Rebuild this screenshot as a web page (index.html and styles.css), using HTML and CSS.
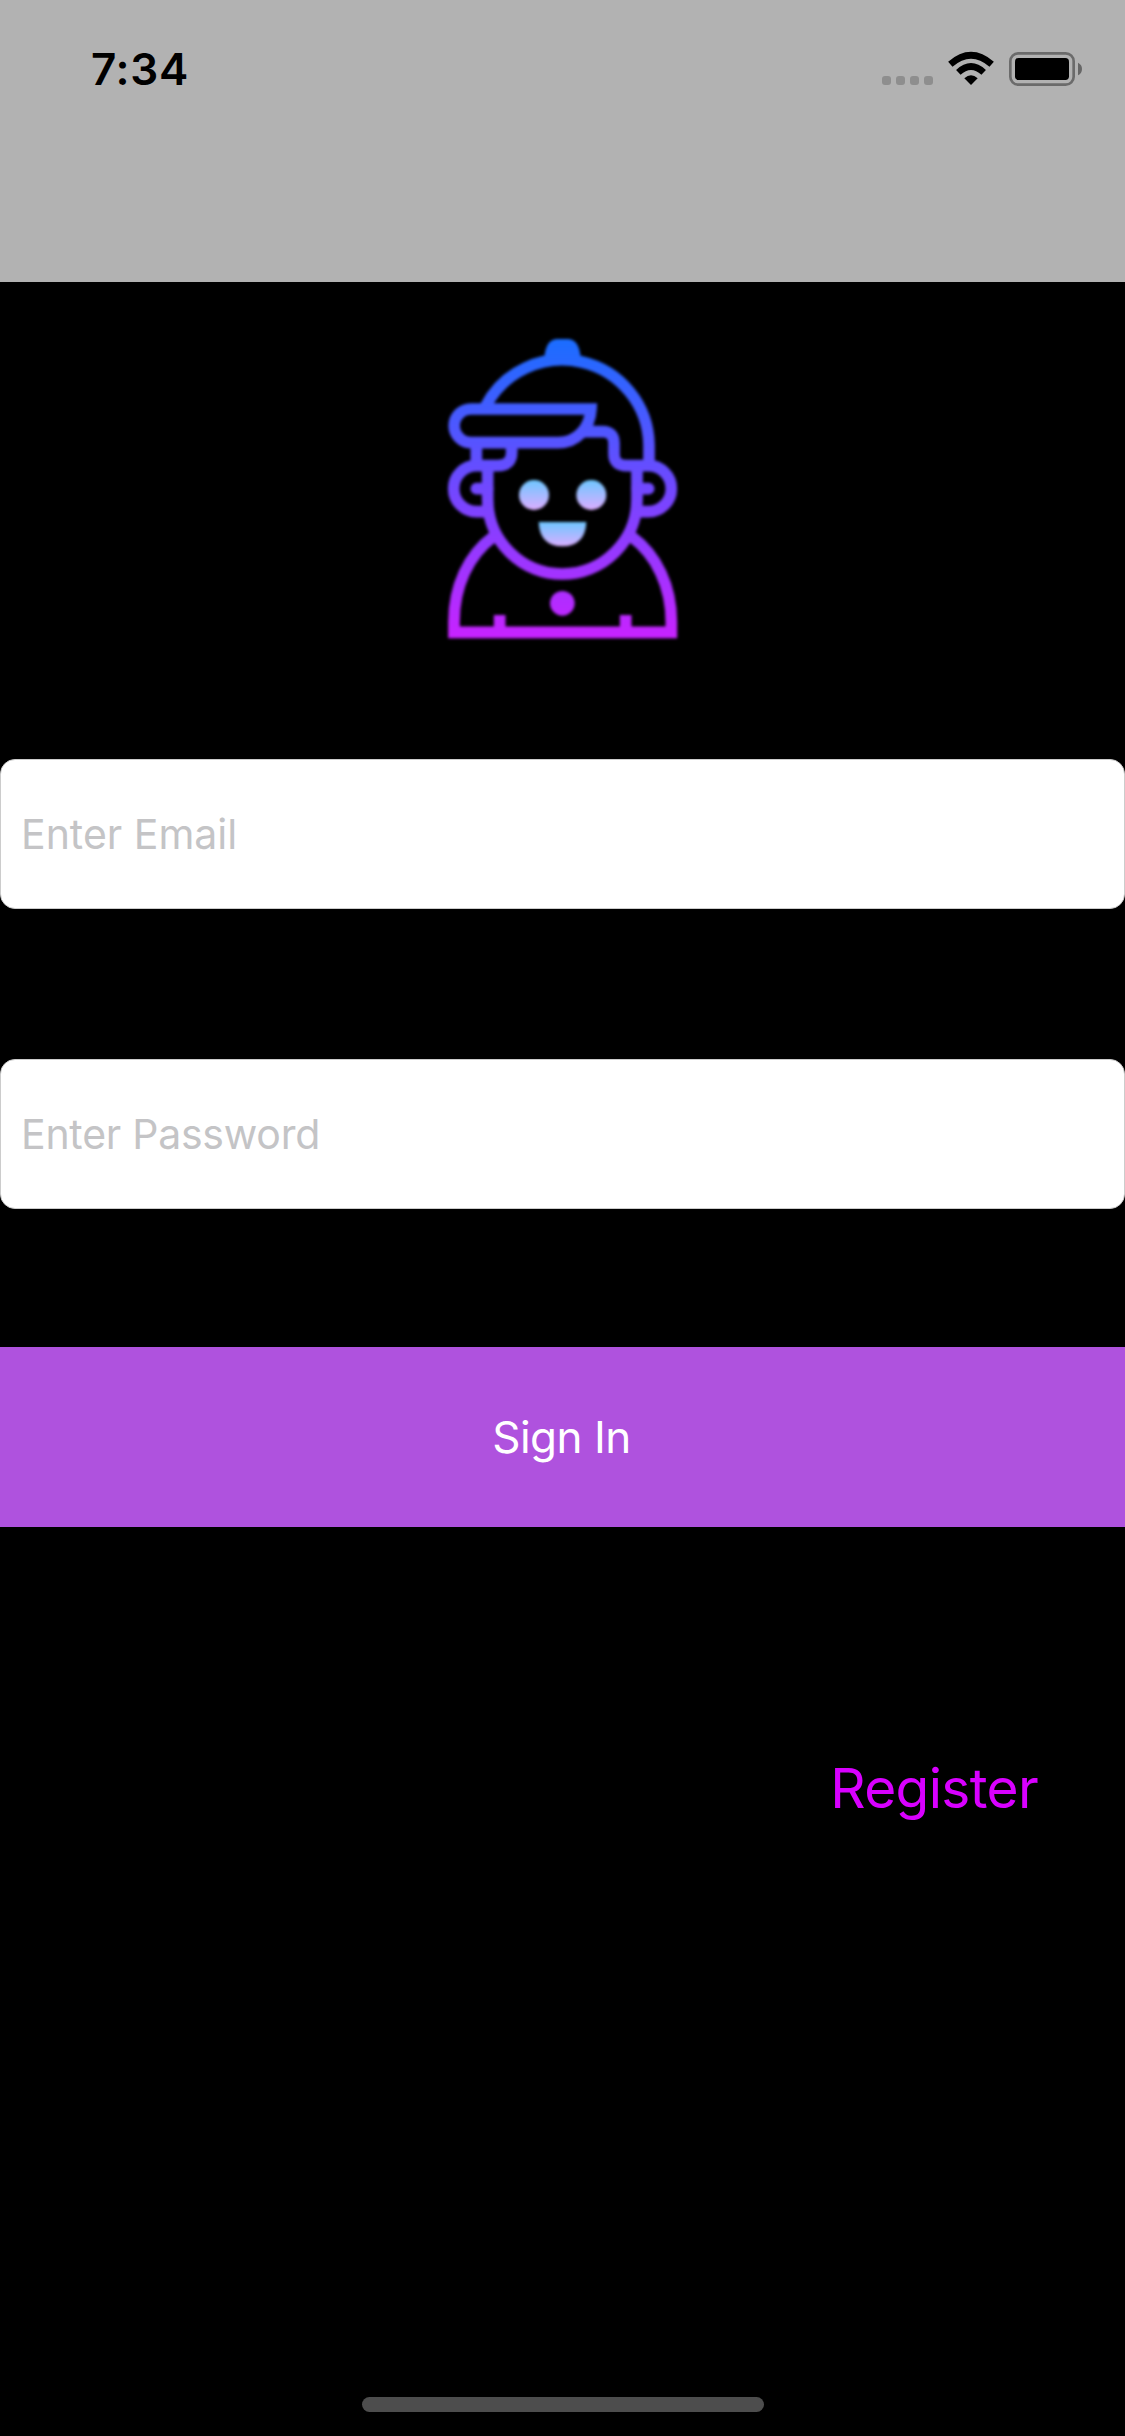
FILE: index.html
```html
<!DOCTYPE html>
<html lang="en">
<head>
<meta charset="utf-8">
<title>Sign In</title>
<link rel="stylesheet" href="styles.css">
</head>
<body>
<div class="screen">
  <header class="status-bar">
    <span class="time">7:34</span>
    <svg class="status-icons" viewBox="0 0 720 240" aria-hidden="true">
      <g fill="#8e8e8e">
        <rect x="66" y="138" width="27" height="27" rx="9"/>
        <rect x="108" y="138" width="27" height="27" rx="9"/>
        <rect x="150" y="138" width="27" height="27" rx="9"/>
        <rect x="192" y="138" width="27" height="27" rx="9"/>
      </g>
      <path d="M333 165 L313 145 Q333 126 353 145 Z"/>
      <g fill="none" stroke="#000" stroke-width="20">
        <path d="M295 127 Q333 92 371 127"/>
        <path d="M271 103 Q333 49 395 103"/>
      </g>
      <rect x="451" y="70" width="190" height="94" rx="24" fill="none" stroke="#6b6b6b" stroke-width="8"/>
      <rect x="465" y="84" width="162" height="66" rx="11"/>
      <path d="M654 98 Q666 104 666 117 Q666 130 654 136 Z" fill="#666"/>
    </svg>
  </header>

  <main class="content">
    <svg class="avatar" viewBox="0 0 810 1020" aria-hidden="true">
      <defs>
        <linearGradient id="line" gradientUnits="userSpaceOnUse" x1="0" y1="57" x2="0" y2="955">
          <stop offset="0" stop-color="#1a6dff"/>
          <stop offset="1" stop-color="#c822ff"/>
        </linearGradient>
        <linearGradient id="eyes" gradientUnits="userSpaceOnUse" x1="0" y1="480" x2="0" y2="578">
          <stop offset="0" stop-color="#6dc7ff"/>
          <stop offset="1" stop-color="#e6abff"/>
        </linearGradient>
        <linearGradient id="mouth" gradientUnits="userSpaceOnUse" x1="0" y1="605" x2="0" y2="688">
          <stop offset="0" stop-color="#6dc7ff"/>
          <stop offset="1" stop-color="#e6abff"/>
        </linearGradient>
        <filter id="soft" filterUnits="userSpaceOnUse" x="0" y="0" width="810" height="1020" color-interpolation-filters="sRGB">
          <feGaussianBlur stdDeviation="4"/>
        </filter>
      </defs>
      <g filter="url(#soft)">
        <g fill="none" stroke="url(#line)" stroke-width="35">
          <path d="M165 262 A260 260 0 0 1 657 375 V430"/>
          <path d="M123 267 H483 C480 325 440 368 385 368 H123 A50.5 50.5 0 0 1 123 267 Z"/>
          <path d="M455 335 H518 Q552 335 552 370 V402 Q552 437 590 437 H655 A69 69 0 0 1 655 575 H618"/>
          <path d="M245 375 V397 Q245 437 203 437 H140 A69 69 0 0 0 140 575 H178"/>
          <path d="M139 375 V437"/>
          <path d="M173 437 V538 A224 224 0 0 0 621 538 V437"/>
          <path d="M173 506 H139 M621 506 H656" stroke-linecap="round"/>
          <path d="M190 650 C115 705 72 800 72 905 V937 H724 V905 C724 800 680 705 605 650"/>
          <path d="M209 885 V937 M587 885 V937"/>
        </g>
        <g fill="url(#line)">
          <path d="M343 112 C346 78 358 58 380 57 H415 C437 58 449 78 452 112 Z"/>
          <circle cx="397" cy="850" r="37"/>
        </g>
        <g fill="url(#eyes)">
          <circle cx="312" cy="525" r="45"/>
          <circle cx="484" cy="525" r="45"/>
        </g>
        <path d="M326 606 H469 Q466 678 397 679 Q329 678 326 606 Z" fill="url(#mouth)"/>
      </g>
    </svg>

    <form class="form">
      <input class="field email" type="email" placeholder="Enter Email">
      <input class="field password" type="password" placeholder="Enter Password">
      <button class="sign-in" type="button">Sign In</button>
    </form>
    <a class="register">Register</a>
  </main>

  <footer class="home"><div class="home-bar"></div></footer>
</div>
</body>
</html>
```
FILE: styles.css
```css
* {
  box-sizing: border-box;
}

body {
  margin: 0;
  background: #000;
  font-family: Inter, "Liberation Sans", sans-serif;
}

.screen {
  display: flex;
  flex-direction: column;
  width: 1125px;
  height: 2436px;
  background: #000;
}

.status-bar {
  display: flex;
  justify-content: space-between;
  align-items: flex-start;
  height: 282px;
  padding: 30px 25px 0 91px;
  background: #b2b2b2;
}

.time {
  padding-top: 12px;
  font-size: 44px;
  font-weight: 600;
  line-height: 54px;
  letter-spacing: 0.7px;
  color: #000;
}

.status-icons {
  width: 240px;
  height: 80px;
}

.content {
  display: flex;
  flex: 1;
  flex-direction: column;
  padding-top: 38px;
}

.avatar {
  width: 270px;
  height: 340px;
  margin-left: 430px;
}

.form {
  display: flex;
  flex-direction: column;
  padding-top: 99px;
}

.field {
  width: 100%;
  height: 150px;
  padding: 0 20px;
  border: 1px solid #ccc;
  border-radius: 15px;
  background: #fff;
  font: 400 41px Inter, "Liberation Sans", sans-serif;
}

.field::placeholder {
  color: #c4c4c6;
  opacity: 1;
}

.password {
  margin-top: 150px;
  letter-spacing: -0.25px;
}

.sign-in {
  height: 180px;
  margin-top: 138px;
  padding: 0 2px 0 0;
  border: 0;
  background: #af52de;
  color: #fff;
  font: 400 44px Inter, "Liberation Sans", sans-serif;
  letter-spacing: -0.5px;
}

.register {
  align-self: flex-end;
  margin: 228px 87px 0 0;
  font-size: 55px;
  line-height: 66px;
  letter-spacing: -0.65px;
  color: #d800ff;
}

.home {
  display: flex;
  justify-content: center;
  padding-bottom: 24px;
}

.home-bar {
  width: 402px;
  height: 15px;
  margin-left: 1px;
  border-radius: 8px;
  background: #4d4d4d;
}
```
